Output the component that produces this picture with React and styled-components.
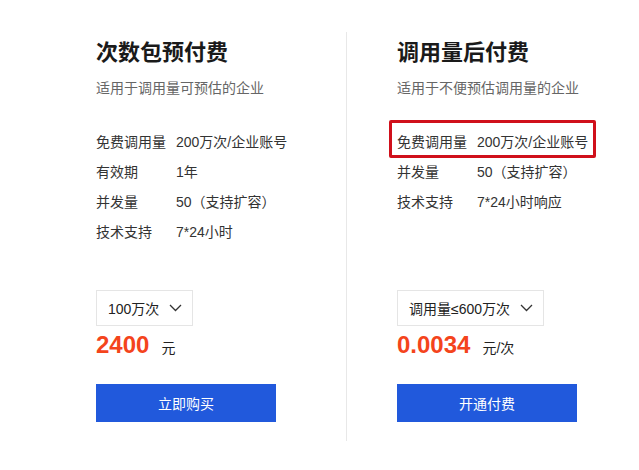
import React from "react";
import styled, { createGlobalStyle } from "styled-components";

const GlobalStyle = createGlobalStyle`
  body {
    margin: 0;
    background: #fff;
    font-family: "Liberation Sans", "Noto Sans CJK SC", sans-serif;
    color: #333;
  }
`;

const plans = [
  {
    title: "次数包预付费",
    desc: "适用于调用量可预估的企业",
    rows: [
      ["免费调用量", "200万次/企业账号"],
      ["有效期", "1年"],
      ["并发量", "50（支持扩容）"],
      ["技术支持", "7*24小时"],
    ],
    select: "100万次",
    price: "2400",
    unit: "元",
    action: "立即购买",
  },
  {
    title: "调用量后付费",
    desc: "适用于不便预估调用量的企业",
    rows: [
      ["免费调用量", "200万次/企业账号", true],
      ["并发量", "50（支持扩容）"],
      ["技术支持", "7*24小时响应"],
    ],
    select: "调用量≤600万次",
    price: "0.0034",
    unit: "元/次",
    action: "开通付费",
  },
];

const Chevron = () => (
  <svg width="13" height="8" viewBox="0 0 13 8" fill="none">
    <polyline points="1,1 6.5,6.5 12,1" stroke="#333" strokeWidth="1.3" />
  </svg>
);

const App = () => {
  return (
    <Page>
      <GlobalStyle />
      {plans.map((p, i) => (
        <Column key={i} $divider={i === 0}>
          <Title>{p.title}</Title>
          <Desc>{p.desc}</Desc>
          <Rows>
            {p.rows.map(([k, v, hl]) => (
              <Row key={k} $highlight={hl}>
                <Label>{k}</Label>
                <Value>{v}</Value>
              </Row>
            ))}
          </Rows>
          <Select>
            <span>{p.select}</span>
            <Chevron />
          </Select>
          <PriceLine>
            <Price>{p.price}</Price>
            <Unit>{p.unit}</Unit>
          </PriceLine>
          <Button>{p.action}</Button>
        </Column>
      ))}
    </Page>
  );
};

export default App;

const Page = styled.div`
  display: flex;
  padding: 32px 0 0 46px;
`;
const Column = styled.div`
  flex-shrink: 0;
  width: 250px;
  padding: 6px 0 19px 50px;
  border-right: ${(p) => (p.$divider ? "1px solid #e8e8e8" : "none")};
  display: flex;
  flex-direction: column;
  align-items: flex-start;
`;
const Title = styled.div`
  font-size: 22px;
  line-height: 30px;
  font-weight: 700;
  color: #1a1a1a;
`;
const Desc = styled.div`
  margin-top: 10px;
  font-size: 14px;
  line-height: 20px;
  color: #666;
`;
const Rows = styled.div`
  margin-top: 28px;
  height: 120px;
  display: flex;
  flex-direction: column;
`;
const Row = styled.div`
  position: relative;
  display: flex;
  width: max-content;
  height: 30px;
  align-items: center;
  font-size: 14px;
  color: #333;
  &::after {
    content: "";
    display: ${(p) => (p.$highlight ? "block" : "none")};
    position: absolute;
    top: -6px;
    bottom: -2px;
    left: -8px;
    right: -8px;
    border: 3px solid #d0101b;
    border-radius: 2px;
  }
`;
const Label = styled.span`
  width: 80px;
`;
const Value = styled.span``;
const Select = styled.div`
  margin-top: 44px;
  height: 36px;
  box-sizing: border-box;
  display: flex;
  align-items: center;
  gap: 10px;
  padding: 0 10px 0 11px;
  border: 1px solid #e5e5e5;
  font-size: 14px;
  color: #222;
`;
const PriceLine = styled.div`
  margin-top: 3px;
  height: 32px;
  display: flex;
  align-items: center;
  gap: 12px;
`;
const Price = styled.span`
  font-size: 24px;
  font-weight: 700;
  color: #f4441c;
`;
const Unit = styled.span`
  font-size: 14px;
  color: #222;
  padding-top: 4px;
`;
const Button = styled.button`
  margin-top: 23px;
  width: 180px;
  height: 38px;
  border: none;
  background-color: #2159dc;
  color: #fff;
  font-family: inherit;
  font-size: 14px;
  cursor: pointer;
`;
